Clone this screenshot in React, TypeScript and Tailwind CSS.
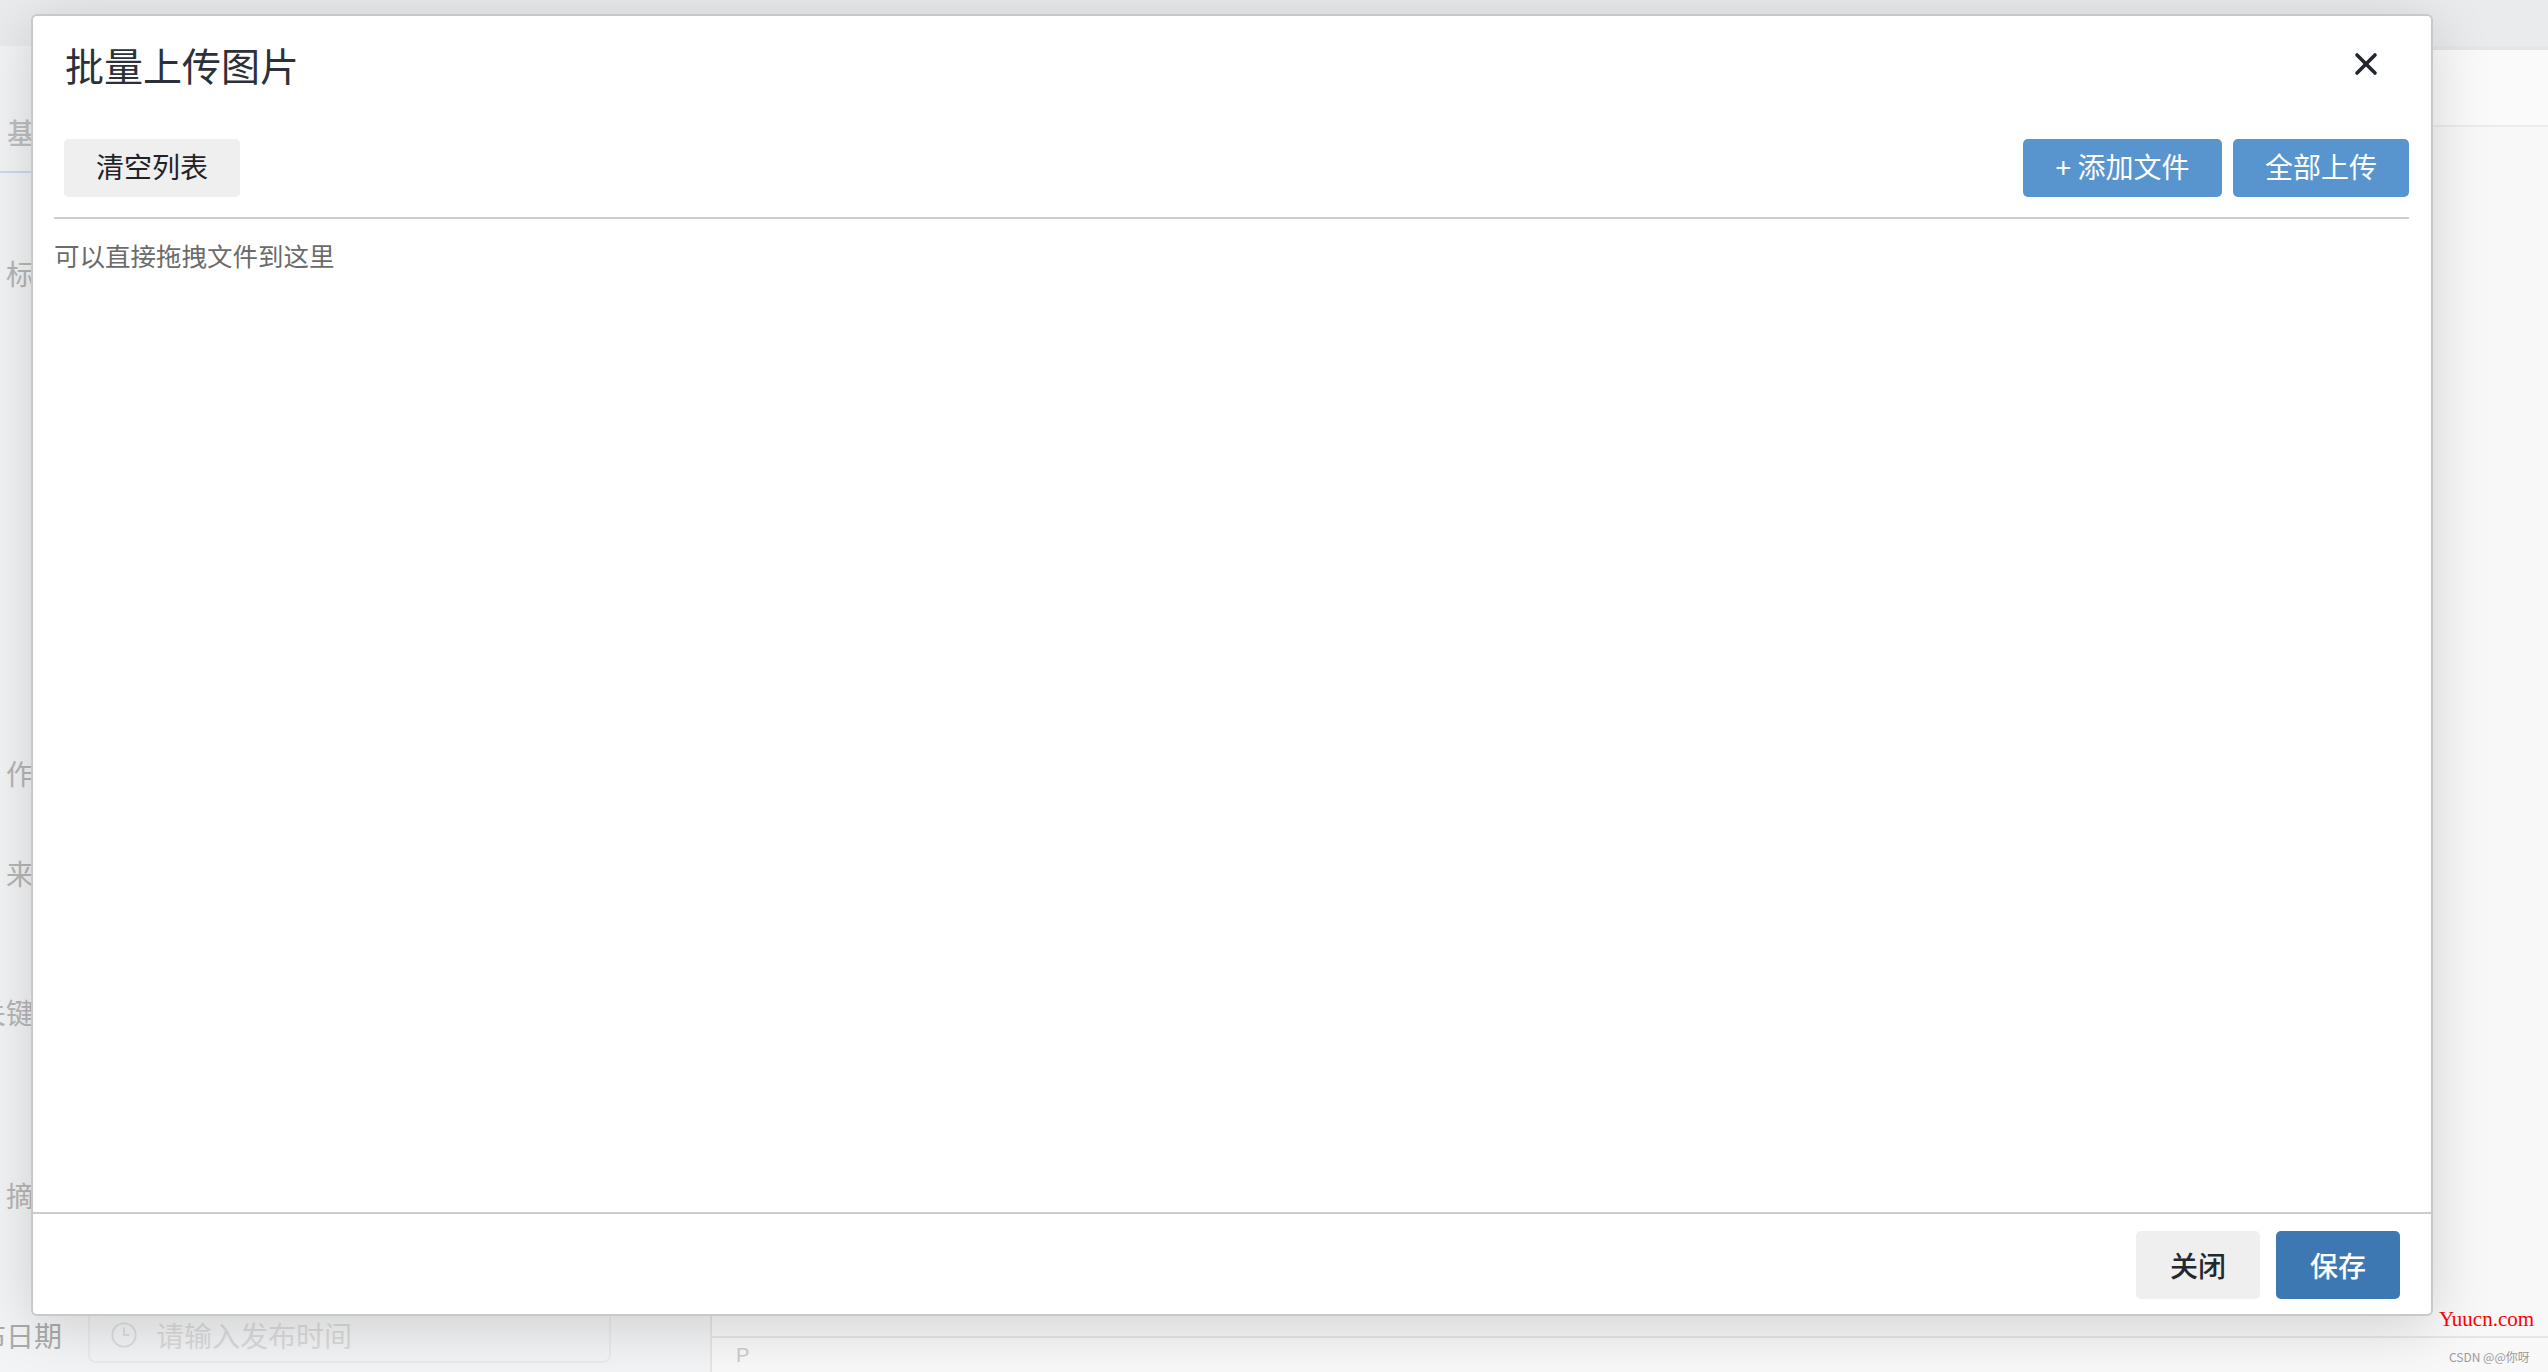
import React from 'react';
import { Clock3 } from 'lucide-react';

const FormRow: React.FC<{ label: string; className?: string }> = ({ label, className }) => (
    <div className={`flex items-center h-[40px] ${className ?? ''}`}>
        <div className="w-[62px] shrink-0 flex justify-end">
            <span className="whitespace-nowrap leading-[40px]">{label}</span>
        </div>
    </div>
);

const CloseIcon: React.FC = () => (
    <svg width="24" height="24" viewBox="0 0 24 24" fill="none" stroke="currentColor" strokeWidth="3.6" strokeLinecap="round">
        <line x1="3" y1="3" x2="21" y2="21" />
        <line x1="21" y1="3" x2="3" y2="21" />
    </svg>
);

const App: React.FC = () => {
    return (
        <div className="relative w-[2548px] h-[1372px] overflow-hidden bg-[#f3f4f5] font-['Noto_Sans_CJK_SC','Noto_Sans',sans-serif]">
            {/* page behind the dialog */}
            <div className="h-[46px] bg-[#eaebed]" />
            <div className="flex h-[1326px]">
                <div className="w-[710px] shrink-0 flex flex-col text-[28px] text-[#b6b6b6]">
                    <div className="mt-[66px] pl-[7px] leading-[40px] font-medium text-[#bfbfbf] whitespace-nowrap">基本信息</div>
                    <div className="mt-[19px] h-[2px] w-[300px] bg-[#c9dcf2]" />
                    <FormRow label="标题" className="mt-[80px]" />
                    <FormRow label="作者" className="mt-[460px]" />
                    <FormRow label="来源" className="mt-[60px]" />
                    <FormRow label="关键词" className="mt-[99px]" />
                    <FormRow label="摘要" className="mt-[143px]" />
                    <div className="mt-[91px] flex items-center h-[57px]">
                        <div className="w-[62px] shrink-0 flex justify-end">
                            <span className="whitespace-nowrap leading-[40px] text-[#ababab]">发布日期</span>
                        </div>
                        <div className="ml-[26px] w-[523px] h-[57px] flex items-center border-2 border-[#ebebeb] rounded-[8px] pl-[20px]">
                            <Clock3 size={28} strokeWidth={1.6} className="text-[#dcdcdc]" />
                            <span className="ml-[18px] whitespace-nowrap text-[#dadada]">请输入发布时间</span>
                        </div>
                    </div>
                </div>
                <div className="flex-1 flex flex-col bg-[#f8f8f9] border-l-2 border-[#e4e5e6]">
                    <div className="h-[4px] bg-[#e5e6e8]" />
                    <div className="h-[77px] border-b-2 border-[#ededee] bg-[#fafafa]" />
                    <div className="flex-1" />
                    <div className="h-[36px] border-t-2 border-[#e6e6e6] pl-[24px] text-[20px] leading-[34px] text-[#cccccc] font-['Liberation_Sans',sans-serif]">P</div>
                </div>
            </div>

            {/* watermarks */}
            <div className="absolute left-[2439px] top-[1307px] text-[21px] leading-[24px] text-[#ff0000] font-['Liberation_Serif',serif] whitespace-nowrap">Yuucn.com</div>
            <div className="absolute left-[2449px] top-[1349px] text-[12px] leading-[16px] text-[#9a9a9a] whitespace-nowrap">CSDN @@你呀</div>

            {/* dialog */}
            <div className="absolute left-[31px] top-[14px] w-[2402px] h-[1302px] flex flex-col bg-white border-2 border-[#c9c9c9] rounded-[6px] shadow-[0_10px_60px_rgba(0,0,0,0.16)]">
                <div className="flex items-start justify-between pl-[32px] pr-[53px] pt-[22px]">
                    <h2 className="text-[39px] leading-[52px] text-[#2c3039] font-normal">批量上传图片</h2>
                    <button className="mt-[14px] w-[24px] h-[24px] text-[#22272f]">
                        <CloseIcon />
                    </button>
                </div>

                <div className="mt-[49px] ml-[21px] mr-[22px] pl-[10px] pb-[20px] border-b-2 border-[#cdcdcd] flex justify-between">
                    <button className="w-[176px] h-[58px] pb-[4px] rounded-[5px] bg-[#efeff0] text-[28px] text-[#1f2329]">清空列表</button>
                    <div className="flex gap-[11px]">
                        <button className="w-[199px] h-[58px] pb-[4px] rounded-[5px] bg-[#5895cf] text-[28px] text-white">+ 添加文件</button>
                        <button className="w-[176px] h-[58px] pb-[4px] rounded-[5px] bg-[#5895cf] text-[28px] text-white">全部上传</button>
                    </div>
                </div>

                <div className="flex-1 ml-[21px] mt-[16px]">
                    <p className="text-[25.5px] leading-[40px] text-[#6b6b6b]">可以直接拖拽文件到这里</p>
                </div>

                <div className="border-t-2 border-[#cdcdcd] flex justify-end gap-[16px] pr-[31px] pt-[17px] pb-[15px]">
                    <button className="w-[124px] h-[68px] rounded-[5px] bg-[#efeff0] text-[28px] font-medium text-[#23272e]">关闭</button>
                    <button className="w-[124px] h-[68px] rounded-[5px] bg-[#3e78b2] text-[28px] font-medium text-white">保存</button>
                </div>
            </div>
        </div>
    );
};

export default App;
